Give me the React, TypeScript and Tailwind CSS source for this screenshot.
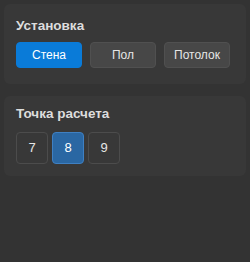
import { useState } from "react";

// ─── Data ─────────────────────────────────────────────────────────────────────

const MOUNTS = ["Стена", "Пол", "Потолок"];
const POINTS = [7, 8, 9];

// ─── Component ────────────────────────────────────────────────────────────────

export default function App() {
  const [mount, setMount] = useState("Стена");
  const [point, setPoint] = useState(8);

  return (
    <div
      className="w-[250px] h-[262px] bg-[#333333] p-1 flex flex-col gap-3"
      style={{ fontFamily: '"Liberation Sans", Arial, sans-serif' }}
    >
      {/* Mount type */}
      <section className="rounded-md bg-[#383838] px-3 pt-[14px] pb-4">
        <h3 className="text-[13.5px] font-bold text-[#dddddd] leading-4 mb-2">
          Установка
        </h3>
        <div className="flex gap-2">
          {MOUNTS.map((m) =>
            m === mount ? (
              <button
                key={m}
                onClick={() => setMount(m)}
                className="w-[66px] h-[26px] rounded-[4px] text-[12px] text-white bg-[#0a7bd8] border border-[#0a7bd8]"
              >
                {m}
              </button>
            ) : (
              <button
                key={m}
                onClick={() => setMount(m)}
                className="w-[66px] h-[26px] rounded-[4px] text-[12px] text-[#e6e6e6] bg-[#474747] border border-[#505050]"
              >
                {m}
              </button>
            )
          )}
        </div>
      </section>

      {/* Calculation point */}
      <section className="rounded-md bg-[#383838] px-3 pt-[10px] pb-3">
        <h3 className="text-[13.5px] font-bold text-[#dddddd] leading-4 mb-[10px]">
          Точка расчета
        </h3>
        <div className="flex gap-1">
          {POINTS.map((p) =>
            p === point ? (
              <button
                key={p}
                onClick={() => setPoint(p)}
                className="w-8 h-8 rounded-[4px] text-[13px] text-white bg-[#2a67a3] border border-[#3f80c2]"
              >
                {p}
              </button>
            ) : (
              <button
                key={p}
                onClick={() => setPoint(p)}
                className="w-8 h-8 rounded-[4px] text-[13px] text-[#e6e6e6] bg-[#383838] border border-[#4c4c4c]"
              >
                {p}
              </button>
            )
          )}
        </div>
      </section>
    </div>
  );
}
